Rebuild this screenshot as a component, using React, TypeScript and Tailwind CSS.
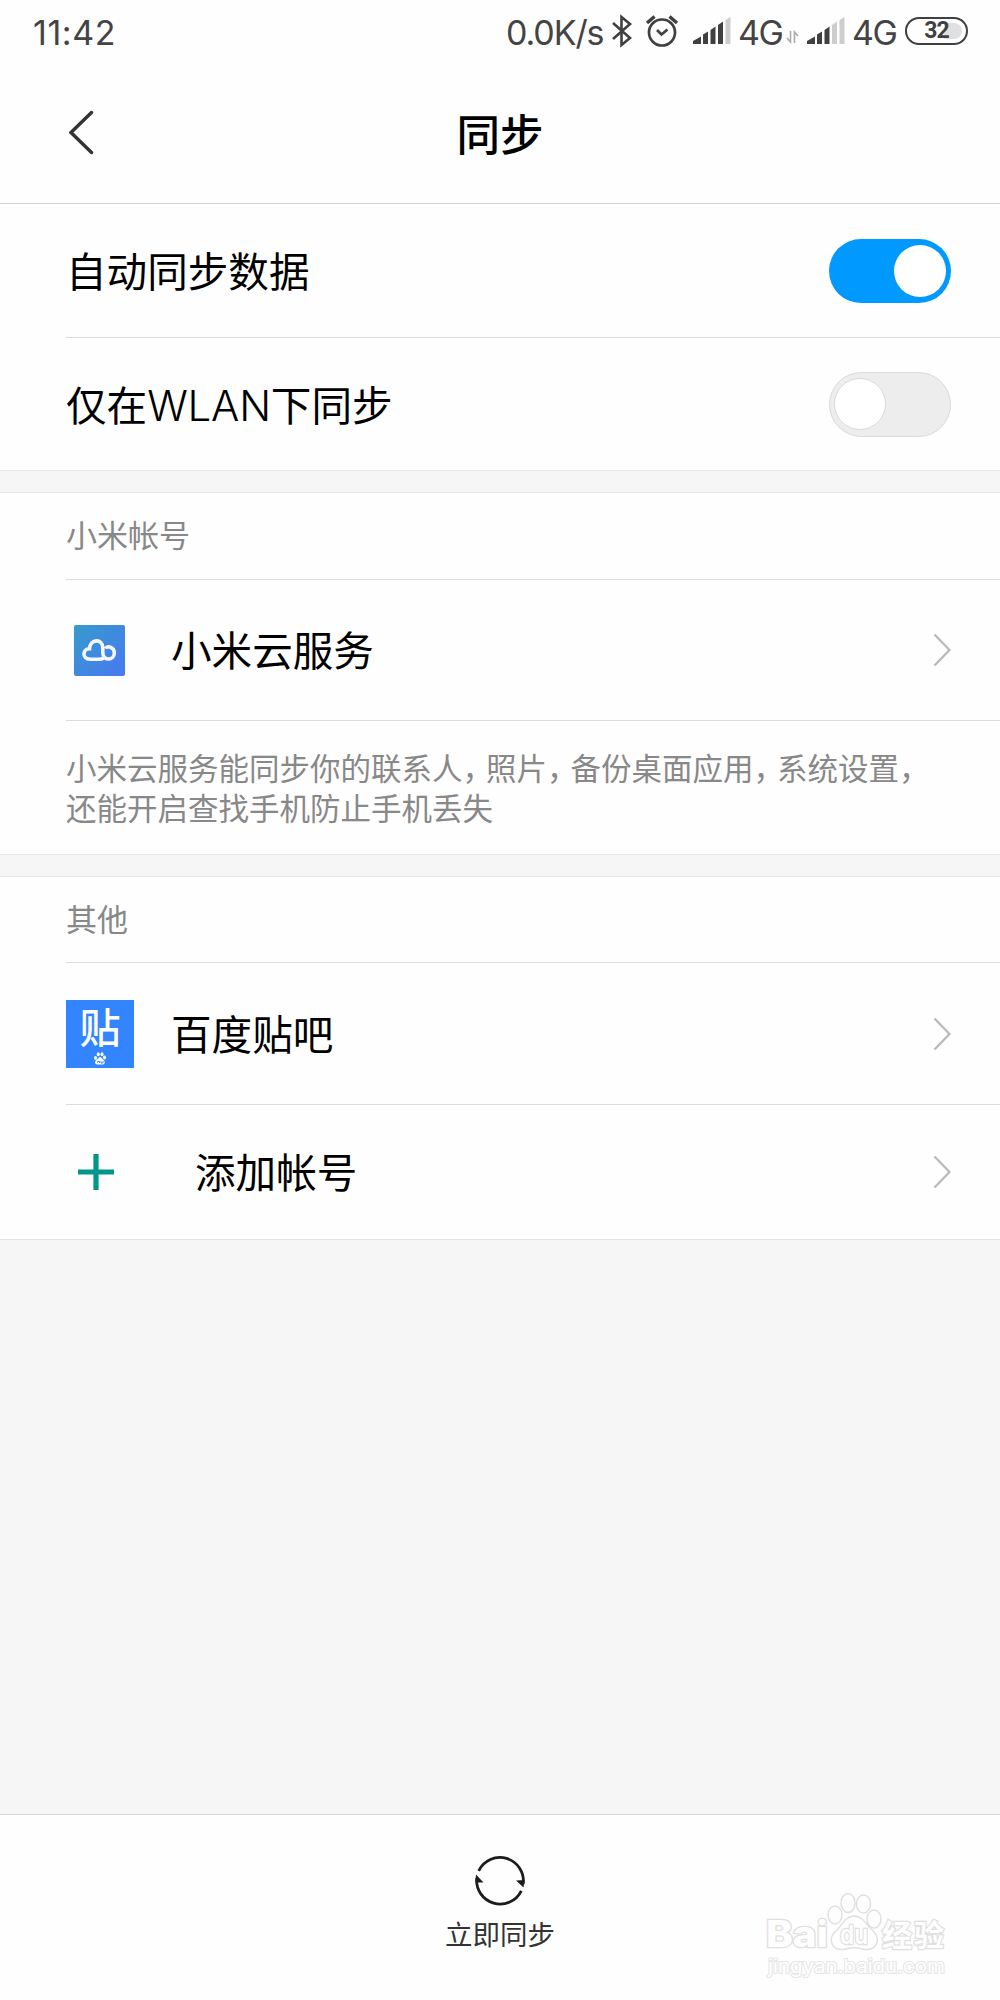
import type { ReactNode } from "react";

function Signal({ level }: { level: number }) {
  const bars = [
    "M0 27 V24 L8 19.5 V27 Z",
    "M10 27 V17.5 L15 14.5 V27 Z",
    "M17.5 27 V13 L22.5 9.5 V27 Z",
    "M25 27 V8 L30 4.5 V27 Z",
    "M32.5 27 V3 L37.5 0 V27 Z",
  ];
  return (
    <svg width="38" height="27" viewBox="0 0 38 27" className="shrink-0">
      {bars.map((d, i) => (
        <path key={d} d={d} fill={i < level ? "#404040" : "#cdcdcd"} />
      ))}
    </svg>
  );
}

function StatusBar() {
  return (
    <div className="flex h-16 items-center pl-[33px] text-[34px] leading-[64px] text-[#444]">
      <span className="w-[473px] pt-px tracking-[0.6px]">11:42</span>
      <span className="w-[105px] pt-px whitespace-nowrap tracking-[-1.1px]">0.0K/s</span>
      <svg width="22" height="34" viewBox="0 0 22 34" fill="none" stroke="#404040" strokeWidth="2.6" className="mb-0.5 shrink-0">
        <path d="M2 9 L19 24 L10.500 31 V3 L19 10 L2 25" strokeLinejoin="miter" />
      </svg>
      <svg width="34" height="34" viewBox="0 0 34 34" fill="none" stroke="#404040" strokeWidth="2.7" className="mb-0.5 ml-3 shrink-0">
        <circle cx="17" cy="18.500" r="13" />
        <path d="M12 16 L16.500 20.500 L22.500 15.500" />
        <path d="M2 9 L9.500 2.500 M24.500 2.500 L32 9" strokeWidth="3.4" />
      </svg>
      <div className="mb-1 ml-3.5 flex items-center">
        <Signal level={4} />
      </div>
      <span className="ml-[7px] w-12 pt-px tracking-[-1.500px]">4G</span>
      <svg width="13" height="14" viewBox="0 0 13 14" fill="none" stroke="#aaa" strokeWidth="1.6" className="mt-2.5 shrink-0">
        <path d="M4.500 1 V12 L1 8 M8.500 13 V2 L12 6" />
      </svg>
      <div className="mb-1 ml-2 flex items-center">
        <Signal level={3} />
      </div>
      <span className="ml-[7px] w-[53px] pt-px tracking-[-1.500px]">4G</span>
      <div className="mb-[3px] flex h-7 w-[63px] items-center rounded-full border-[2.500px] border-[#404040] p-1">
        <div className="flex h-full w-full items-center justify-center rounded-full bg-linear-to-r from-transparent from-65% to-[#e0e0e0] to-65%">
          <span className="font-['Roboto'] text-[23px] leading-none font-bold tracking-[-1px] text-[#404040]">32</span>
        </div>
      </div>
    </div>
  );
}

function Toggle({ on }: { on?: boolean }) {
  return on ? (
    <div className="mt-px flex h-16 w-[122px] items-center justify-end rounded-full bg-[#0099ff] pr-[5px]">
      <div className="size-[52px] rounded-full bg-white" />
    </div>
  ) : (
    <div className="flex h-[65px] w-[122px] items-center rounded-full border border-[#dadada] bg-[#ededed] pl-1">
      <div className="size-[52px] rounded-full border border-[#dadada] bg-white" />
    </div>
  );
}

function Chevron() {
  return (
    <svg width="18" height="34" viewBox="0 0 18 34" fill="none" stroke="#b8b8b8" strokeWidth="2.2">
      <path d="M1.500 1.500 L16.500 17 L1.500 32.500" />
    </svg>
  );
}

function Row({ className, children }: { className: string; children: ReactNode }) {
  return (
    <div className={`flex items-center pr-[49px] text-[40.6px] leading-[60px] text-black ${className}`}>
      {children}
    </div>
  );
}

function Divider() {
  return <div className="ml-[66px] h-px bg-[#dcdcdc]" />;
}

function Gap() {
  return <div className="h-[23px] border-y border-[#e8e8e8] bg-[#f6f6f6]" />;
}

function CloudIcon() {
  return (
    <svg width="51" height="51" viewBox="0 0 51 51" fill="none">
      <defs>
        <linearGradient id="cloud" x1="0" y1="0" x2="1" y2="1">
          <stop offset="0" stopColor="#369bcb" />
          <stop offset="1" stopColor="#4878f2" />
        </linearGradient>
      </defs>
      <rect width="51" height="51" rx="2" fill="url(#cloud)" />
      <path
        d="M29.500 32.800 C28.500 34.300 27 34.300 25 34.300 H16 C7.500 34 8.500 23.500 15.500 23.800 C16 13.500 28.700 13.500 28.800 22.500 V28 C29 36.500 40.300 35.500 40.300 28.300 C40.300 21.500 33 20.500 31.500 23.500"
        stroke="#f4f7ff"
        strokeWidth="3.6"
      />
    </svg>
  );
}

function Paw() {
  return (
    <svg width="12" height="13" viewBox="0 0 24 26" fill="#fff">
      <ellipse cx="3" cy="12" rx="3" ry="4" />
      <ellipse cx="8.500" cy="4.500" rx="3" ry="4.200" />
      <ellipse cx="16" cy="4.500" rx="3" ry="4.200" />
      <ellipse cx="21" cy="11" rx="3" ry="4" />
      <path d="M12 10 C15 10 16 14 19 16 C24 20 21 26 16 25 H7 C1 25 1 19 5 16 C8 14 9 10 12 10Z" />
      <path d="M7 22 V19 H11 V22 M14 18 V22 H18 V18" fill="none" stroke="#3385ff" strokeWidth="1.800" />
    </svg>
  );
}

function TiebaIcon() {
  return (
    <div className="flex size-[68px] flex-col items-center bg-[#3385ff] pt-1.5">
      <span className="h-[46px] text-[41px] leading-[45px] font-medium text-white">贴</span>
      <Paw />
    </div>
  );
}

function SyncIcon() {
  return (
    <svg width="52" height="52" viewBox="0 0 52 52" fill="none" stroke="#1c1c1c" strokeWidth="2.800">
      <path d="M4.700 15.800 A23.500 23.500 0 0 1 49.200 29" />
      <path d="M47.300 35.800 A23.500 23.500 0 0 1 2.800 23" />
      <path d="M42 25.500 L50.500 25 L49.500 32.500 Z M2 19.500 L9.500 27.500 L1.500 27.500 Z" fill="#1c1c1c" stroke="none" />
    </svg>
  );
}

function Watermark() {
  return (
    <svg
      width="190"
      height="100"
      viewBox="0 0 190 100"
      fill="#fefefe"
      stroke="#e0e0e0"
      strokeWidth="1.500"
      className="absolute right-[48px] bottom-[20px]"
    >
      <text x="4" y="67" fontSize="37" fontWeight="800" textLength="62" lengthAdjust="spacingAndGlyphs" strokeWidth="2.500" paintOrder="stroke">
        Bai
      </text>
      <ellipse cx="73" cy="35" rx="7" ry="9" />
      <ellipse cx="86" cy="23" rx="7" ry="9.500" />
      <ellipse cx="101.500" cy="24" rx="7" ry="9" />
      <ellipse cx="112" cy="39" rx="7" ry="9" />
      <path d="M92 36 C99 36 103 42 108 48 C121 58 115 71 103 69.500 C95 67 89 67 82 69.500 C68 71 65 57 76 49 C81 43 85 36 92 36Z" />
      <text x="78" y="64" fontSize="26" fontWeight="600" textLength="28" lengthAdjust="spacingAndGlyphs" strokeWidth="2.500" paintOrder="stroke">
        du
      </text>
      <text x="120" y="66" fontSize="30" fontWeight="700" textLength="62" strokeWidth="2.500" paintOrder="stroke">
        经验
      </text>
      <text x="6" y="93" fontSize="18.500" textLength="177" lengthAdjust="spacingAndGlyphs" strokeWidth="2" stroke="#e6e6e6" paintOrder="stroke">
        jingyan.baidu.com
      </text>
    </svg>
  );
}

export default function App() {
  return (
    <div className="flex h-[2000px] w-[1000px] flex-col overflow-hidden bg-[#f6f6f6] font-['Inter','Noto_Sans_CJK_SC',sans-serif]">
      <header className="h-[204px] shrink-0 border-b border-[#d4d4d4] bg-[#fefefe]">
        <StatusBar />
        <div className="grid h-[139px] grid-cols-[1fr_auto_1fr] items-center pl-[69px]">
          <svg width="26" height="46" viewBox="0 0 26 46" fill="none" stroke="#333" strokeWidth="3.400" strokeLinecap="round" className="mb-0.5">
            <path d="M22.500 2.500 L2 22.500 L22.500 42.500" />
          </svg>
          <h1 className="mt-0.5 -ml-[69px] text-[43.500px] leading-[60px] font-medium text-black">同步</h1>
        </div>
      </header>

      <main className="bg-[#fefefe]">
        <Row className="h-[133px] justify-between pl-[66px]">
          <span className="pt-1">自动同步数据</span>
          <Toggle on />
        </Row>
        <Divider />
        <Row className="h-[132px] justify-between pl-[66px]">
          <span className="pt-1">
            仅在<span className="text-[42px] tracking-[-0.2px] font-light">WLAN</span>下同步
          </span>
          <Toggle />
        </Row>
        <Gap />

        <h2 className="h-[86px] pl-[66px] text-[31px] leading-[86px] text-[#888]">小米帐号</h2>
        <Divider />
        <Row className="h-[140px] pl-[74px]">
          <CloudIcon />
          <span className="ml-[46px] flex-1 pt-1">小米云服务</span>
          <Chevron />
        </Row>
        <Divider />
        <p className="h-[133px] pt-7 pl-[66px] text-[30.500px] leading-10 text-[#888]">
          小米云服务能同步你的联系人<span className="tracking-[-7px]">，</span>照片
          <span className="tracking-[-7px]">，</span>备份桌面应用
          <span className="tracking-[-7px]">，</span>系统设置，
          <br />
          还能开启查找手机防止手机丢失
        </p>
        <Gap />

        <h2 className="h-[85px] pl-[66px] text-[31px] leading-[86px] text-[#888]">其他</h2>
        <Divider />
        <Row className="h-[141px] pl-[66px]">
          <TiebaIcon />
          <span className="ml-[37px] flex-1 pt-1">百度贴吧</span>
          <Chevron />
        </Row>
        <Divider />
        <Row className="h-[134px] pl-[78px]">
          <svg width="36" height="36" viewBox="0 0 36 36" stroke="#009688" strokeWidth="5.200">
            <path d="M18 0 V36 M0 18 H36" />
          </svg>
          <span className="ml-[81px] flex-1 pt-[3px]">添加帐号</span>
          <Chevron />
        </Row>
        <div className="h-px bg-[#e4e4e4]" />
      </main>

      <footer className="relative mt-auto flex h-[186px] flex-col items-center border-t border-[#d8d8d8] bg-[#fefefe] pt-10">
        <SyncIcon />
        <span className="mt-1.5 text-[27.500px] leading-[44px] text-[#333]">立即同步</span>
        <Watermark />
      </footer>
    </div>
  );
}
